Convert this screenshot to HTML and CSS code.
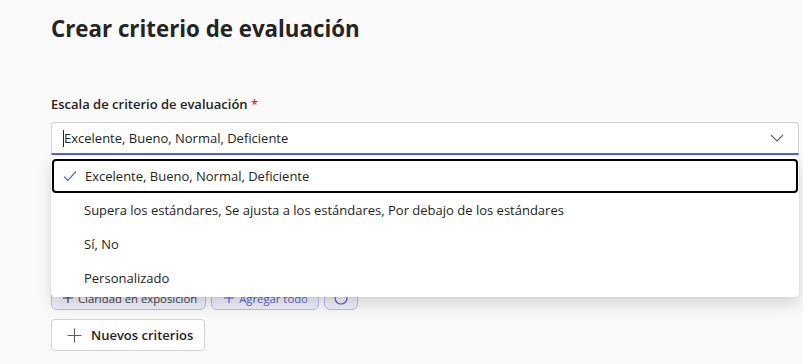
FILE: index.html
```html
<!DOCTYPE html>
<html lang="es">
  <head>
    <meta charset="UTF-8" />
    <meta name="viewport" content="width=device-width, initial-scale=1.0" />
    <title>Crear criterio de evaluación</title>
    <link rel="stylesheet" href="styles.css">
  </head>
  <body>
    <div class="page">
      <h1 class="title">Crear criterio de evaluación</h1>
      <div class="field">
        <label class="label">Escala de criterio de evaluación <span class="req">*</span></label>
        <div class="combo">
          <div class="combo-input">
            <span class="caret"></span>
            <span class="value">Excelente, Bueno, Normal, Deficiente</span>
            <svg class="chevron" width="14" height="8" viewBox="0 0 14 8" fill="none">
              <path d="M1 1L7 7L13 1" stroke="#616161" stroke-width="1.1" />
            </svg>
          </div>
          <ul class="listbox">
            <li class="option selected">
              <svg class="check" width="14" height="12" viewBox="0 0 14 12" fill="none">
                <path d="M1 6.5L4.8 10.3L13 1.5" stroke="#5b5fc7" stroke-width="1.2" />
              </svg>
              Excelente, Bueno, Normal, Deficiente
            </li>
            <li class="option">Supera los estándares, Se ajusta a los estándares, Por debajo de los estándares</li>
            <li class="option">Sí, No</li>
            <li class="option">Personalizado</li>
          </ul>
        </div>
      </div>
      <div class="chips">
        <div class="chip">
          <svg width="10" height="10" viewBox="0 0 10 10" fill="none">
            <path d="M5 0V10M0 5H10" stroke="#424242" stroke-width="1.2" />
          </svg>
          Claridad en exposición
        </div>
        <div class="chip purple">
          <svg width="10" height="10" viewBox="0 0 10 10" fill="none">
            <path d="M5 0V10M0 5H10" stroke="#5b5fc7" stroke-width="1.2" />
          </svg>
          Agregar todo
        </div>
        <div class="chip purple icon-only">
          <svg width="14" height="14" viewBox="0 0 14 14" fill="none">
            <circle cx="7" cy="7" r="6" stroke="#5b5fc7" stroke-width="1.2" />
          </svg>
        </div>
      </div>
      <button class="new-btn">
        <svg width="15" height="15" viewBox="0 0 15 15" fill="none">
          <path d="M7.5 0.5V14.5M0.5 7.5H14.5" stroke="#616161" stroke-width="1.2" />
        </svg>
        Nuevos criterios
      </button>
    </div>
  </body>
</html>
```

FILE: styles.css
```css
body {
  margin: 0;
  background: #fafafa;
  font-family: "Open Sans", "Noto Sans", sans-serif;
  color: #242424;
}
.page {
  padding: 12px 0 0 51px;
  width: 748px;
}
.title {
  margin: 0;
  font-size: 22.3px;
  font-weight: 700;
  line-height: 34px;
}
.field {
  margin-top: 48px;
}
.label {
  display: block;
  font-size: 13px;
  font-weight: 600;
  line-height: 20px;
  margin-bottom: 8px;
}
.req {
  color: #c4314b;
}
.combo {
  position: relative;
}
.combo-input {
  height: 30px;
  background: #fff;
  border: 1px solid #d1d1d1;
  border-bottom: 2px solid #5b5fc7;
  border-radius: 4px 4px 0 0;
  display: flex;
  align-items: center;
  padding: 0 14px 0 11px;
  font-size: 13px;
}
.caret {
  width: 1px;
  height: 17px;
  background: #242424;
}
.value {
  flex: 1;
}
.listbox {
  position: absolute;
  top: 34px;
  left: 0;
  right: 0;
  margin: 0;
  padding: 3px 1px 2px;
  list-style: none;
  background: #fff;
  border-radius: 4px;
  box-shadow: 0 8px 16px rgba(0, 0, 0, 0.14), 0 0 2px rgba(0, 0, 0, 0.12);
  z-index: 2;
}
.option {
  height: 34px;
  display: flex;
  align-items: center;
  padding-left: 32px;
  font-size: 13px;
  color: #242424;
  box-sizing: border-box;
}
.option.selected {
  border: 2px solid #000;
  border-radius: 4px;
  padding-left: 9px;
  gap: 8px;
}
.chips {
  display: flex;
  gap: 5px;
  margin-top: 131px;
}
.chip {
  height: 22px;
  border: 1px solid #b8bbf0;
  background: #f0f0fb;
  border-radius: 6px;
  padding: 0 8px 0 11px;
  gap: 5px;
  font-size: 11.3px;
  display: flex;
  align-items: center;
  color: #424242;
}
.chip.purple {
  color: #5b5fc7;
  padding: 0 10px 0 12px;
  gap: 5px;
}
.chip.icon-only {
  padding: 0 9px;
}
.new-btn {
  margin-top: 9px;
  height: 32px;
  display: flex;
  align-items: center;
  gap: 9px;
  padding: 0 11px 0 15px;
  background: #fff;
  border: 1px solid #d1d1d1;
  border-radius: 4px;
  font-family: inherit;
  font-size: 13px;
  font-weight: 600;
  color: #242424;
}
```
